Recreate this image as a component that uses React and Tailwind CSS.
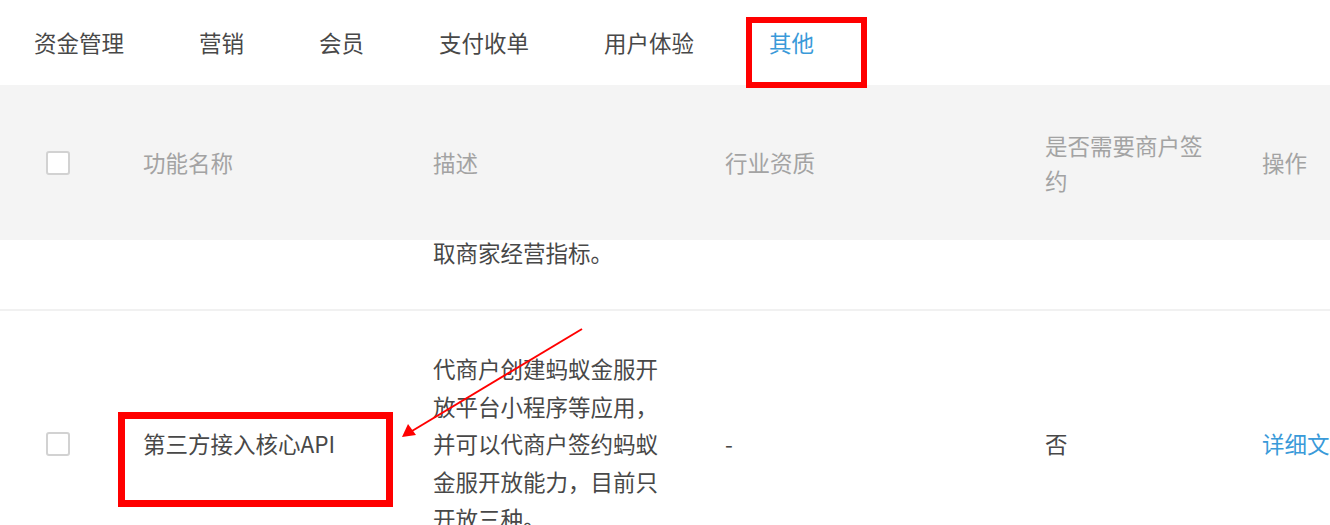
import React from 'react'

const TABS = ['资金管理', '营销', '会员', '支付收单', '用户体验', '其他']

const font = { fontFamily: '"Noto Sans CJK SC", "Noto Sans", sans-serif' }

function Checkbox() {
  return <div className="w-[24px] h-[24px] rounded-[3px] border-2 border-[#d2d2d2] bg-white" />
}

export default function App() {
  return (
    <div className="relative w-[1330px] h-[525px] overflow-hidden bg-white" style={font}>
      {/* tabs */}
      <div className="h-[85px] flex items-center pl-[34px] gap-[75px] text-[22.5px] text-[#484848]">
        {TABS.map((t) => (
          <span key={t} className={t === '其他' ? 'text-[#3a9ad9]' : ''}>
            {t}
          </span>
        ))}
      </div>

      <div className="w-[1400px]">
        {/* header */}
        <div className="h-[155px] bg-[#f4f4f4] flex items-center text-[22.5px] text-[#a3a3a3] leading-[35px]">
          <div className="w-[143px] pl-[46px] flex items-center">
            <Checkbox />
          </div>
          <div className="w-[290px]">功能名称</div>
          <div className="w-[292px]">描述</div>
          <div className="w-[320px]">行业资质</div>
          <div className="w-[217px] pr-[45px]">是否需要商户签约</div>
          <div className="w-[100px]">操作</div>
        </div>

        {/* previous row tail */}
        <div className="h-[71px] border-b-2 border-[#f1f1f1] flex text-[22.5px] text-[#484848]">
          <div className="w-[433px]" />
          <div className="leading-[24px]">取商家经营指标。</div>
        </div>

        {/* row */}
        <div className="flex items-center pt-[39px] text-[22.5px] text-[#484848]">
          <div className="w-[143px] pl-[46px] flex items-center">
            <Checkbox />
          </div>
          <div className="w-[290px]">第三方接入核心API</div>
          <div className="w-[292px] pr-[55px] leading-[37.5px]">
            代商户创建蚂蚁金服开放平台小程序等应用，并可以代商户签约蚂蚁金服开放能力，目前只开放三种。
          </div>
          <div className="w-[320px]">-</div>
          <div className="w-[217px]">否</div>
          <div className="w-[120px] text-[#3a9ad9]">详细文档</div>
        </div>
      </div>

      {/* annotations */}
      <div className="absolute left-[746px] top-[17px] w-[121px] h-[71px] border-[6px] border-[#f00]" />
      <div className="absolute left-[118px] top-[412px] w-[275px] h-[95px] border-[7px] border-[#f00]" />
      <svg className="absolute left-0 top-0" width="1330" height="525">
        <line x1="582" y1="329" x2="412" y2="431" stroke="#f00" strokeWidth="2" />
        <polygon points="402,437 408,424 416,435" fill="#f00" />
      </svg>
    </div>
  )
}
